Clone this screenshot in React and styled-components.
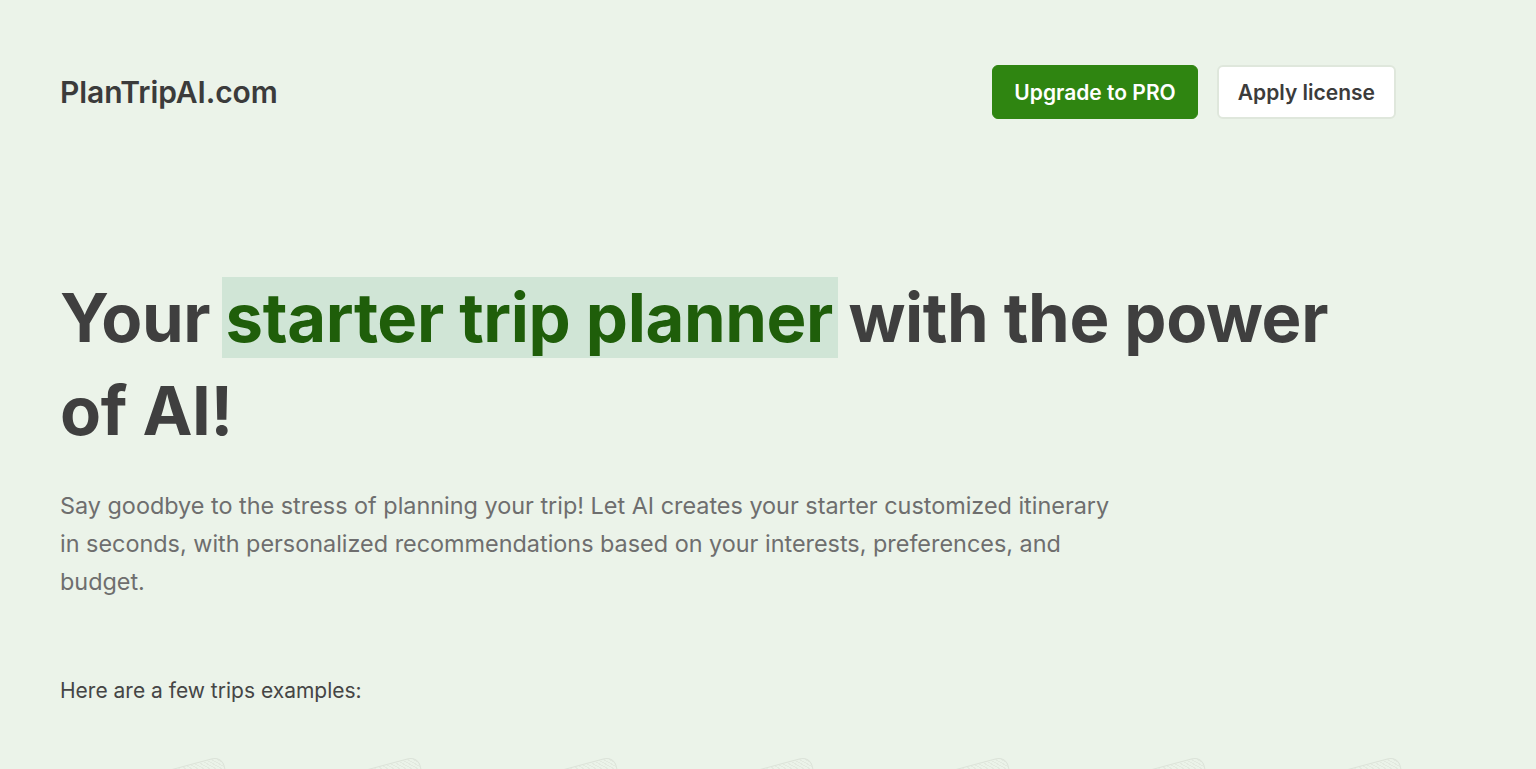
import React from 'react';
import styled, { createGlobalStyle } from 'styled-components';

const trips = [0, 1, 2, 3, 4, 5, 6];

const App = () => {
  return (
    <Page>
      <GlobalStyle />
      <Header>
        <Logo>PlanTripAI.com</Logo>
        <Actions>
          <Button primary>Upgrade to PRO</Button>
          <Button>Apply license</Button>
        </Actions>
      </Header>
      <Hero>
        <Title>
          Your <Highlight>starter trip planner</Highlight> with the power of AI!
        </Title>
        <Lead>
          Say goodbye to the stress of planning your trip! Let AI creates your starter customized itinerary
          in seconds, with personalized recommendations based on your interests, preferences, and budget.
        </Lead>
        <Examples>Here are a few trips examples:</Examples>
        <CardRow>
          {trips.map((t) => (
            <CardSlot key={t}>
              <TripCard />
            </CardSlot>
          ))}
        </CardRow>
      </Hero>
    </Page>
  );
};

export default App;

const GlobalStyle = createGlobalStyle`
  html, body {
    margin: 0;
    padding: 0;
    background: #ebf3e9;
    font-family: Inter, "Noto Sans", sans-serif;
    overflow: hidden;
  }
`;

const Page = styled.div`
  width: 1536px;
  height: 769px;
  background: #ebf3e9;
  padding: 65px 140px 0 60px;
  box-sizing: border-box;
  overflow: hidden;
`;

const Header = styled.div`
  display: flex;
  justify-content: space-between;
  align-items: center;
  height: 54px;
`;

const Logo = styled.div`
  font-size: 30px;
  font-weight: 600;
  color: #3b3b3b;
  letter-spacing: -0.1px;
`;

const Actions = styled.div`
  display: flex;
  gap: 19px;
`;

const Button = styled.button`
  height: 54px;
  padding: 0 ${(p) => (p.primary ? '21px' : '19px')};
  border-radius: 6px;
  font-family: Inter, sans-serif;
  font-size: 21px;
  font-weight: 600;
  cursor: pointer;
  background: ${(p) => (p.primary ? '#2f8511' : '#ffffff')};
  color: ${(p) => (p.primary ? '#ffffff' : '#3b3b3b')};
  border: ${(p) => (p.primary ? '1px solid #2f8511' : '2px solid #dfe7dc')};
`;

const Hero = styled.div`
  padding-top: 152px;
`;

const Title = styled.h1`
  margin: 0;
  font-size: 67px;
  font-weight: 700;
  line-height: 93px;
  color: #3f3f3f;
  letter-spacing: -0.4px;
  max-width: 1300px;
`;

const Highlight = styled.span`
  color: #1f5e0a;
  background: #d0e5d6;
  box-shadow: -4px 0 0 #d0e5d6, 5px 0 0 #d0e5d6;
`;

const Lead = styled.p`
  margin: 30px 0 0;
  max-width: 1060px;
  font-size: 23.4px;
  line-height: 38px;
  color: #6e6e6e;
`;

const Examples = styled.p`
  margin: 77px 0 0;
  font-size: 21px;
  color: #454545;
`;

const CardRow = styled.div`
  display: flex;
  margin-top: 92px;
  padding-left: 15px;
`;

const CardSlot = styled.div`
  width: 196px;
  flex: none;
`;

const TripCard = styled.div`
  width: 150px;
  height: 200px;
  border: 1px solid #dce3d9;
  border-radius: 10px;
  transform: rotate(-15deg);
  transform-origin: top left;
  background: repeating-linear-gradient(45deg, #e2e9df 0 1px, transparent 1px 3px);
`;
